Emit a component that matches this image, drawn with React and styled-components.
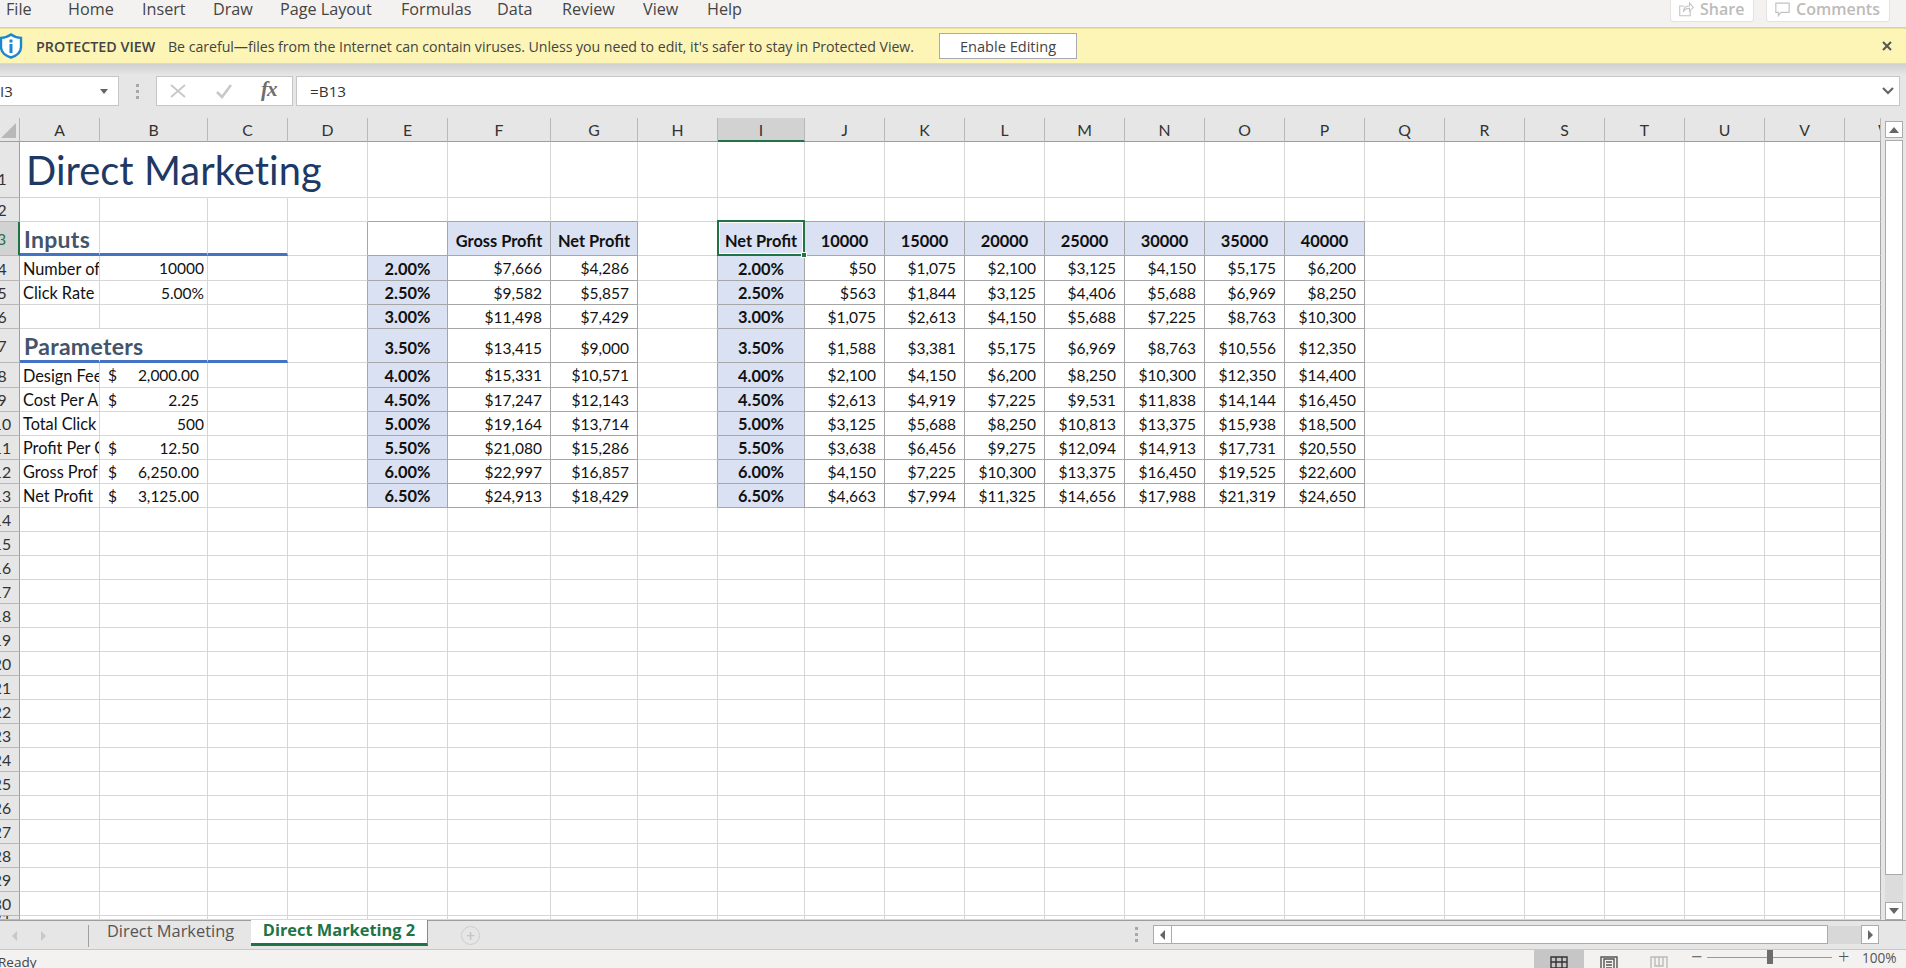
import React from "react";
import styled, { createGlobalStyle } from "styled-components";

const Global = createGlobalStyle`
  html, body { margin: 0; padding: 0; height: 100%; overflow: hidden; background: #e6e6e6; }
  * { box-sizing: border-box; }
`;

const UI = `"Open Sans", "Noto Sans", "Liberation Sans", sans-serif`;
const SHEET = `Lato, "Liberation Sans", sans-serif`;

const Page = styled.div`
  width: 1906px; height: 968px; overflow: hidden; display: flex; flex-direction: column;
  font-family: ${UI}; background: #e6e6e6; position: relative;
`;

/* ribbon */
const Ribbon = styled.div`
  height: 28px; flex: none; display: flex; background: #f3f2f1; border-bottom: 1px solid #d2d0ce;
  padding-left: 6px; position: relative; overflow: hidden;
`;
const RibbonTab = styled.div`
  width: ${p => p.$w}px; flex: none; font-size: 16.2px; line-height: 18px; margin-top: -1px; color: #444; white-space: nowrap;
  transform: scaleY(1.04); transform-origin: top;
`;
const RibbonActions = styled.div`
  margin-left: auto; display: flex; gap: 12px; padding-right: 16px; margin-top: -6px;
`;
const GhostButton = styled.div`
  height: 28px; width: ${p => p.$w}px; background: #fff; border: 1px solid #e4e2e0; border-radius: 3px; display: flex; align-items: center;
  padding: 1px 0 0 8px; gap: 6px; color: #bdbbb9; font-size: 16px; font-weight: 600;
`;

/* protected view */
const Banner = styled.div`
  height: 36px; flex: none; background: #fcf5b6; border-bottom: 1px solid #e4de9c; border-top: 1px solid #e8e2a2; display: flex; align-items: center; color: #444; font-size: 14.4px; position: relative;
`;
const Shield = styled.svg`
  width: 24px; height: 26px; margin-left: -1px; flex: none;
`;
const BannerTitle = styled.span`
  font-weight: 600; margin-left: 13px; width: 132px; flex: none; white-space: nowrap; font-size: 14.3px;
`;
const BannerText = styled.span`
  width: 771px; flex: none; white-space: nowrap; font-size: 14.18px; letter-spacing: -0.04px;
`;
const EnableButton = styled.div`
  width: 138px; height: 26px; background: #fff; border: 1px solid #a9a9b0; display: flex; align-items: center; justify-content: center; font-size: 14.6px; color: #444;
`;
const CloseX = styled.svg`
  width: 10px; height: 10px; position: absolute; right: 14px; top: 12px;
`;

/* formula */
const FormulaRow = styled.div`
  height: 54px; flex: none; padding: 12px 6px 12px 0; display: flex; background: linear-gradient(#d0d0d0 0, #e6e6e6 11px);
`;
const NameBox = styled.div`
  width: 121px; margin-left: -2px; flex: none; height: 30px; background: #fff; border: 1px solid #c6c6c6; display: flex; align-items: center; justify-content: space-between;
  font-size: 15px; color: #333; padding: 0 10px 0 0;
  span { margin-left: 1px; }
`;
const Caret = styled.i`
  width: 0; height: 0; border: 4px solid transparent; border-top: 5px solid #666; border-bottom: 0;
`;
const Dots = styled.div`
  width: 37px; flex: none; display: flex; flex-direction: column; align-items: center; justify-content: center; gap: 3px;
  i { width: 3px; height: 3px; background: #a8a8a8; }
`;
const FxBox = styled.div`
  width: 137px; flex: none; background: #fff; border: 1px solid #c6c6c6; position: relative; display: flex; align-items: center; padding-left: 13px; gap: 30px;
`;
const FxLabel = styled.span`
  font-family: "Liberation Serif", serif; font-style: italic; font-weight: 700; font-size: 21px; color: #6e6e6e; letter-spacing: -1px; margin-left: -1px; margin-top: -4px;
`;
const FormulaInput = styled.div`
  flex: 1; margin-left: 3px; background: #fff; border: 1px solid #c6c6c6; display: flex; align-items: center; justify-content: space-between; padding: 0 5px 0 13px; font-size: 15.3px; color: #333;
`;

/* sheet */
const SheetRow = styled.div`
  height: 802px; flex: none; display: flex;
`;
const Grid = styled.div`
  width: 1881px; height: 802px; flex: none; overflow: hidden; display: grid; background: #fff;
  grid-template-columns: 20px 80px 108px 80px 80px 80px 103px 87px 80px 87px repeat(13, 80px) 36px;
  grid-template-rows: 24px 56px 24px 34px 25px 24px 24px 34px 25px repeat(22, 24px) 4px;
  font-family: ${SHEET}; font-size: 15.5px; color: #111;
`;
const Corner = styled.div`
  background: #e6e6e6; border-bottom: 1px solid #9e9e9e; border-right: 1px solid #b4b4b4; position: relative;
  &::after { content: ""; position: absolute; right: 3px; bottom: 3px; width: 0; height: 0; border-style: solid; border-width: 0 0 15px 15px; border-color: transparent transparent #b8b8b8 transparent; }
`;
const ColHead = styled.div`
  background: ${p => p.$active ? "#d2d2d2" : "#e6e6e6"};
  border-bottom: ${p => p.$active ? "2px solid #217346" : "1px solid #9e9e9e"};
  border-right: 1px solid #b8b8b8;
  display: flex; align-items: center; justify-content: ${p => p.$clip ? "flex-start" : "center"};
  padding-left: ${p => p.$clip ? "33px" : "0"};
  overflow: hidden; color: #333; font-size: 15.8px; white-space: nowrap;
`;
const RowHead = styled.div`
  background: ${p => p.$active ? "#d2d2d2" : "#e6e6e6"};
  color: ${p => p.$active ? "#217346" : "#333"};
  border-bottom: 1px solid #b8b8b8;
  border-right: ${p => p.$active ? "2px solid #217346" : "1px solid #9e9e9e"};
  display: flex; align-items: center; justify-content: center; padding: ${p => p.$low ? "18px" : "0"} 15px 0 0;
  font-size: 15.8px; white-space: nowrap; overflow: hidden;
`;
const Cell = styled.div`
  position: relative; min-width: 0;
  background: ${p => p.$fill ? "#d9e1f2" : p.$spill ? "transparent" : "#fff"};
  border-right: 1px solid ${p => p.$spill ? "transparent" : p.$edgeR ? "#a6a6a6" : "#d6d6d6"};
  border-bottom: ${p => p.$rule ? "3px solid #4472c4" : `1px solid ${p.$edgeB ? "#a6a6a6" : "#d6d6d6"}`};
  display: flex; align-items: ${p => p.$tall ? "flex-end" : "center"};
  justify-content: ${p => p.$a === "r" ? "flex-end" : p.$a === "c" ? "center" : p.$a === "b" ? "space-between" : "flex-start"};
  padding: ${p => p.$tall && !p.$rule ? "0 0 5px" : "0"};
  padding-left: ${p => p.$pl ?? 3}px; padding-right: ${p => p.$pr ?? 0}px;
  font-weight: ${p => p.$bold ? 700 : 400};
  font-size: ${p => p.$bold ? "16.4px" : "inherit"};
  white-space: nowrap; overflow: ${p => p.$spill ? "visible" : "hidden"};
  z-index: ${p => p.$spill ? 1 : 0};
`;
const Label = styled.span`
  font-size: 16.3px;
`;
const Title = styled.span`
  font-size: 39.8px; color: #203864; padding-left: 3px; line-height: 1; letter-spacing: .05px;
`;
const Section = styled.span`
  font-size: 23px; font-weight: 700; color: #44546a; margin-left: 1px; letter-spacing: .3px;
`;
const Selection = styled.i`
  position: absolute; inset: -2px -1px -1px -1px; border: 2px solid #217346; box-shadow: inset 0 0 0 1px #fff; pointer-events: none;
`;
const Handle = styled.i`
  position: absolute; right: -3px; bottom: -3px; background: #217346; border: 1px solid #fff; box-sizing: content-box; width: 4px; height: 4px;
`;

/* vertical scrollbar */
const VBar = styled.div`
  width: 25px; flex: none; padding: 3px 3px 0 4px; display: flex; flex-direction: column; background: #e6e6e6;
`;
const ScrollBtn = styled.div`
  width: 18px; height: ${p => p.$h || 18}px; flex: none; background: #fff; border: 1px solid #ababab; display: flex; align-items: center; justify-content: center;
`;
const VTrack = styled.div`
  flex: 1; background: #dcdcdc; margin-top: 2px;
`;
const VThumb = styled.div`
  height: 735px; background: #fff; border: 1px solid #ababab;
`;
const Up = styled.i`
  width: 0; height: 0; border: 5px solid transparent; border-bottom: 6px solid #666; border-top: 0;
`;
const Down = styled.i`
  width: 0; height: 0; border: 5px solid transparent; border-top: 6px solid #666; border-bottom: 0;
`;
const Left = styled.i`
  width: 0; height: 0; border: 5px solid transparent; border-right: 5px solid ${p => p.$c || "#666"}; border-left: 0;
`;
const Right = styled.i`
  width: 0; height: 0; border: 5px solid transparent; border-left: 5px solid ${p => p.$c || "#666"}; border-right: 0;
`;

/* tabs */
const TabStrip = styled.div`
  height: 30px; flex: none; background: #e6e6e6; border-top: 1px solid #9e9e9e; border-bottom: 1px solid #c8c8c8; display: flex; align-items: flex-start; position: relative;
`;
const TabNav = styled.div`
  width: 89px; height: 22px; margin-top: 4px; flex: none; display: flex; gap: 24px; padding-left: 12px; align-items: center; border-right: 1px solid #a0a0a0;
`;
const Tab = styled.div`
  width: ${p => p.$w}px; height: 25px; flex: none; display: flex; align-items: center; justify-content: center; white-space: nowrap; font-size: 16.4px; padding-bottom: 4px;
  margin-top: -1px;
  color: ${p => p.$active ? "#217346" : "#555"}; font-weight: ${p => p.$active ? 700 : 400};
  background: ${p => p.$active ? "#fff" : "transparent"};
  ${p => p.$active ? "border-bottom: 3px solid #217346; border-right: 1px solid #8a8a8a; height: 26px; margin-left: -1px;" : ""}
`;
const AddTab = styled.div`
  width: 19px; height: 19px; border-radius: 50%; border: 1.5px solid #cdcdcd; margin: 5px 0 0 33px; color: #c6c6c6; display: flex; align-items: center; justify-content: center; font-size: 16px; line-height: 1; font-weight: 600;
`;
const HScroll = styled.div`
  position: absolute; left: 1129px; top: 4px; height: 19px; display: flex; align-items: center;
`;
const HDots = styled(Dots)`
  width: 14px; margin-right: 10px; gap: 3px;
`;
const HThumb = styled.div`
  width: 657px; height: 19px; background: #fff; border: 1px solid #ababab; margin-left: -1px;
`;
const HTrack = styled.div`
  width: 33px; height: 18px; background: #d8d8d8;
`;
const HBtn = styled.div`
  width: ${p => p.$w}px; height: 19px; background: #fff; border: 1px solid #ababab; display: flex; align-items: center; justify-content: center;
`;

/* status */
const Status = styled.div`
  flex: 1; background: #f3f2f1; display: flex; align-items: flex-start; color: #444; font-size: 13px; overflow: hidden; position: relative;
`;
const Ready = styled.span`
  margin-left: -2px; margin-top: 5px; line-height: 14px; font-size: 13.5px;
`;
const Views = styled.div`
  margin-left: auto; display: flex;
`;
const ViewBtn = styled.div`
  width: 50px; height: 19px; display: flex; justify-content: center; padding-top: 6px; background: ${p => p.$on ? "#c6c6c6" : "transparent"};
`;
const Zoom = styled.div`
  width: 222px; flex: none; display: flex; align-items: center; height: 27px; padding-left: 7px; color: #555;
`;
const ZMark = styled.span`
  font-size: 20px; font-weight: 300; width: 10px; line-height: 1; margin-top: -13px; text-align: center;
`;
const Slider = styled.div`
  width: 125px; height: 1px; background: #9a9a9a; margin: -13px 6px 0 6px; position: relative;
`;
const Knob = styled.i`
  position: absolute; left: 60px; top: -7px; width: 6px; height: 14px; background: #6d6d6d;
`;
const Pct = styled.span`
  font-size: 13.6px; margin-left: 14px; margin-top: -12px; color: #555;
`;

const COLS = "ABCDEFGHIJKLMNOPQRSTUVW".split("");
const tabs = [["File", 62], ["Home", 74], ["Insert", 71], ["Draw", 67], ["Page Layout", 121], ["Formulas", 96], ["Data", 65], ["Review", 81], ["View", 64], ["Help", 60]];

const rates = ["2.00%", "2.50%", "3.00%", "3.50%", "4.00%", "4.50%", "5.00%", "5.50%", "6.00%", "6.50%"];
const fg = [["$7,666", "$4,286"], ["$9,582", "$5,857"], ["$11,498", "$7,429"], ["$13,415", "$9,000"], ["$15,331", "$10,571"], ["$17,247", "$12,143"], ["$19,164", "$13,714"], ["$21,080", "$15,286"], ["$22,997", "$16,857"], ["$24,913", "$18,429"]];
const heads = ["10000", "15000", "20000", "25000", "30000", "35000", "40000"];
const matrix = [
  ["$50", "$1,075", "$2,100", "$3,125", "$4,150", "$5,175", "$6,200"],
  ["$563", "$1,844", "$3,125", "$4,406", "$5,688", "$6,969", "$8,250"],
  ["$1,075", "$2,613", "$4,150", "$5,688", "$7,225", "$8,763", "$10,300"],
  ["$1,588", "$3,381", "$5,175", "$6,969", "$8,763", "$10,556", "$12,350"],
  ["$2,100", "$4,150", "$6,200", "$8,250", "$10,300", "$12,350", "$14,400"],
  ["$2,613", "$4,919", "$7,225", "$9,531", "$11,838", "$14,144", "$16,450"],
  ["$3,125", "$5,688", "$8,250", "$10,813", "$13,375", "$15,938", "$18,500"],
  ["$3,638", "$6,456", "$9,275", "$12,094", "$14,913", "$17,731", "$20,550"],
  ["$4,150", "$7,225", "$10,300", "$13,375", "$16,450", "$19,525", "$22,600"],
  ["$4,663", "$7,994", "$11,325", "$14,656", "$17,988", "$21,319", "$24,650"],
];

const content = {};
const put = (k, v) => { content[k] = v; };
put("A1", { node: <Title>Direct Marketing</Title>, spill: true });
put("B1", { spill: true }); put("C1", { spill: true });
put("A3", { node: <Section>Inputs</Section>, rule: true, tall: true, pl: 3 });
put("B3", { rule: true }); put("C3", { rule: true });
put("A7", { node: <Section>Parameters</Section>, rule: true, tall: true, spill: true, pl: 3 });
put("B7", { rule: true }); put("C7", { rule: true });
const label = (r, t) => put("A" + r, { node: <Label>{t}</Label> });
label(4, "Number of"); label(5, "Click Rate"); label(8, "Design Fee"); label(9, "Cost Per A");
label(10, "Total Click"); label(11, "Profit Per C"); label(12, "Gross Prof"); label(13, "Net Profit");
put("B4", { node: "10000", a: "r", pr: 3 });
put("B5", { node: "5.00%", a: "r", pr: 3 });
put("B10", { node: "500", a: "r", pr: 3 });
const money = (r, v) => put("B" + r, { node: <><span>$</span><span>{v}</span></>, a: "b", pl: 8, pr: 8 });
money(8, "2,000.00"); money(9, "2.25"); money(11, "12.50"); money(12, "6,250.00"); money(13, "3,125.00");

put("E3", { box: true });
put("F3", { node: "Gross Profit", a: "c", bold: true, fill: true, box: true, tall: true, pl: 0 });
put("G3", { node: "Net Profit", a: "c", bold: true, fill: true, box: true, tall: true, pl: 0 });
put("I3", { node: "Net Profit", a: "c", bold: true, fill: true, box: true, tall: true, pl: 0, sel: true, over: true });
heads.forEach((h, i) => put("JKLMNOP"[i] + "3", { node: h, a: "c", bold: true, fill: true, box: true, tall: true, pl: 0 }));
rates.forEach((rate, i) => {
  const r = i + 4, tall = r === 7;
  put("E" + r, { node: rate, a: "c", bold: true, fill: true, box: true, tall, pl: 0 });
  put("F" + r, { node: fg[i][0], a: "r", pr: 8, box: true, tall });
  put("G" + r, { node: fg[i][1], a: "r", pr: 8, box: true, tall });
  put("I" + r, { node: rate, a: "c", bold: true, fill: true, box: true, tall, pl: 0 });
  matrix[i].forEach((m, j) => put("JKLMNOP"[j] + r, { node: m, a: "r", pr: 8, box: true, tall }));
});

const tableCols = ["E", "F", "G", "I", "J", "K", "L", "M", "N", "O", "P"];
const leftOfTable = c => c === "D" || c === "H";

function SheetGrid() {
  const out = [<Corner key="corner" />];
  COLS.forEach(c => out.push(
    <ColHead key={c} $active={c === "I"} $clip={c === "W"}>{c}</ColHead>
  ));
  for (let r = 1; r <= 31; r++) {
    out.push(<RowHead key={"r" + r} $active={r === 3} $low={r === 1}>{r}</RowHead>);
    COLS.forEach(c => {
      const d = content[c + r] || {};
      const inTableRow = r >= 3 && r <= 13;
      const edgeR = d.box || (leftOfTable(c) && inTableRow) || c === "W";
      const edgeB = d.box || (r === 2 && tableCols.includes(c));
      out.push(
        <Cell key={c + r} $a={d.a} $bold={d.bold} $fill={d.fill} $spill={d.spill || d.over} $rule={d.rule}
          $tall={d.tall} $pl={d.pl} $pr={d.pr} $edgeR={edgeR} $edgeB={edgeB}>
          {d.node}
          {d.sel && <Selection />}
          {d.sel && <Handle />}
        </Cell>
      );
    });
  }
  return <Grid>{out}</Grid>;
}

export default function App() {
  return (
    <Page>
      <Global />
      <Ribbon>
        {tabs.map(([t, w]) => <RibbonTab key={t} $w={w}>{t}</RibbonTab>)}
        <RibbonActions>
          <GhostButton $w={84}>
            <svg width="15" height="16" viewBox="0 0 20 20" fill="none" stroke="#c4c2c0" strokeWidth="1.400">
              <path d="M7 6H1v13h14v-6" />
              <path d="M6 13c0-4 3-7 8-7V2l5 6-5 5V9c-3 0-6 1-8 4z" />
            </svg>
            Share
          </GhostButton>
          <GhostButton $w={124}>
            <svg width="15" height="16" viewBox="0 0 18 18" fill="none" stroke="#c4c2c0" strokeWidth="1.400">
              <path d="M1 2h16v11H7l-3 4v-4H1z" />
            </svg>
            Comments
          </GhostButton>
        </RibbonActions>
      </Ribbon>
      <Banner>
        <Shield viewBox="0 0 24 26">
          <path d="M12 1.5c3 2.2 6.5 3.2 10 3.4v9c0 5-4.2 8.6-10 10.6C6.2 22.5 2 18.900 2 13.900v-9c3.500-.2 7-1.200 10-3.400z" fill="#fff" stroke="#1b87d0" strokeWidth="2.400" />
          <rect x="10.500" y="6.500" width="3" height="3" fill="#1b87d0" />
          <rect x="10.500" y="11" width="3" height="9" fill="#1b87d0" />
        </Shield>
        <BannerTitle>PROTECTED VIEW</BannerTitle>
        <BannerText>Be careful—files from the Internet can contain viruses. Unless you need to edit, it's safer to stay in Protected View.</BannerText>
        <EnableButton>Enable Editing</EnableButton>
        <CloseX viewBox="0 0 10 10" stroke="#555" strokeWidth="2"><path d="M1 1l8 8M9 1l-8 8" /></CloseX>
      </Banner>
      <FormulaRow>
        <NameBox><span>I3</span><Caret /></NameBox>
        <Dots><i /><i /><i /></Dots>
        <FxBox>
          <svg width="16" height="16" viewBox="0 0 16 16" stroke="#c8c8c8" strokeWidth="1.800" fill="none"><path d="M1 2l14 12M15 2L1 14" /></svg>
          <svg width="16" height="16" viewBox="0 0 16 16" stroke="#c8c8c8" strokeWidth="2.600" fill="none"><path d="M1 9l5 5L15 2" /></svg>
          <FxLabel>fx</FxLabel>
        </FxBox>
        <FormulaInput>
          =B13
          <svg width="12" height="8" viewBox="0 0 12 8" stroke="#666" strokeWidth="2.200" fill="none"><path d="M1 1l5 5 5-5" /></svg>
        </FormulaInput>
      </FormulaRow>
      <SheetRow>
        <SheetGrid />
        <VBar>
          <ScrollBtn $h={17}><Up /></ScrollBtn>
          <VTrack>
            <VThumb />
          </VTrack>
          <ScrollBtn $h={18}><Down /></ScrollBtn>
        </VBar>
      </SheetRow>
      <TabStrip>
        <TabNav><Left $c="#c8c8c8" /><Right $c="#c8c8c8" /></TabNav>
        <Tab $w={163}>Direct Marketing</Tab>
        <Tab $w={177} $active>Direct Marketing 2</Tab>
        <AddTab>+</AddTab>
        <HScroll>
          <HDots><i /><i /><i /></HDots>
          <HBtn $w={19}><Left /></HBtn>
          <HThumb />
          <HTrack />
          <HBtn $w={18}><Right /></HBtn>
        </HScroll>
      </TabStrip>
      <Status>
        <Ready>Ready</Ready>
        <Views>
          <ViewBtn $on>
            <svg width="18" height="18" viewBox="0 0 18 18" fill="none" stroke="#333" strokeWidth="1.400"><path d="M1 1h16v16H1zM1 6h16M1 12h16M6 1v16M12 1v16" /></svg>
          </ViewBtn>
          <ViewBtn>
            <svg width="18" height="18" viewBox="0 0 18 18" fill="none" stroke="#555" strokeWidth="1.400"><path d="M1 1h16v16H1zM4 3h10v12H4zM6 6h6M6 9h6M6 12h6" /></svg>
          </ViewBtn>
          <ViewBtn>
            <svg width="18" height="18" viewBox="0 0 18 18" fill="none" stroke="#bbb" strokeWidth="1.400"><path d="M1 1h16v16H1zM5 1v9h8V1M9 1v9" /></svg>
          </ViewBtn>
        </Views>
        <Zoom>
          <ZMark>−</ZMark>
          <Slider><Knob /></Slider>
          <ZMark>+</ZMark>
          <Pct>100%</Pct>
        </Zoom>
      </Status>
    </Page>
  );
}
